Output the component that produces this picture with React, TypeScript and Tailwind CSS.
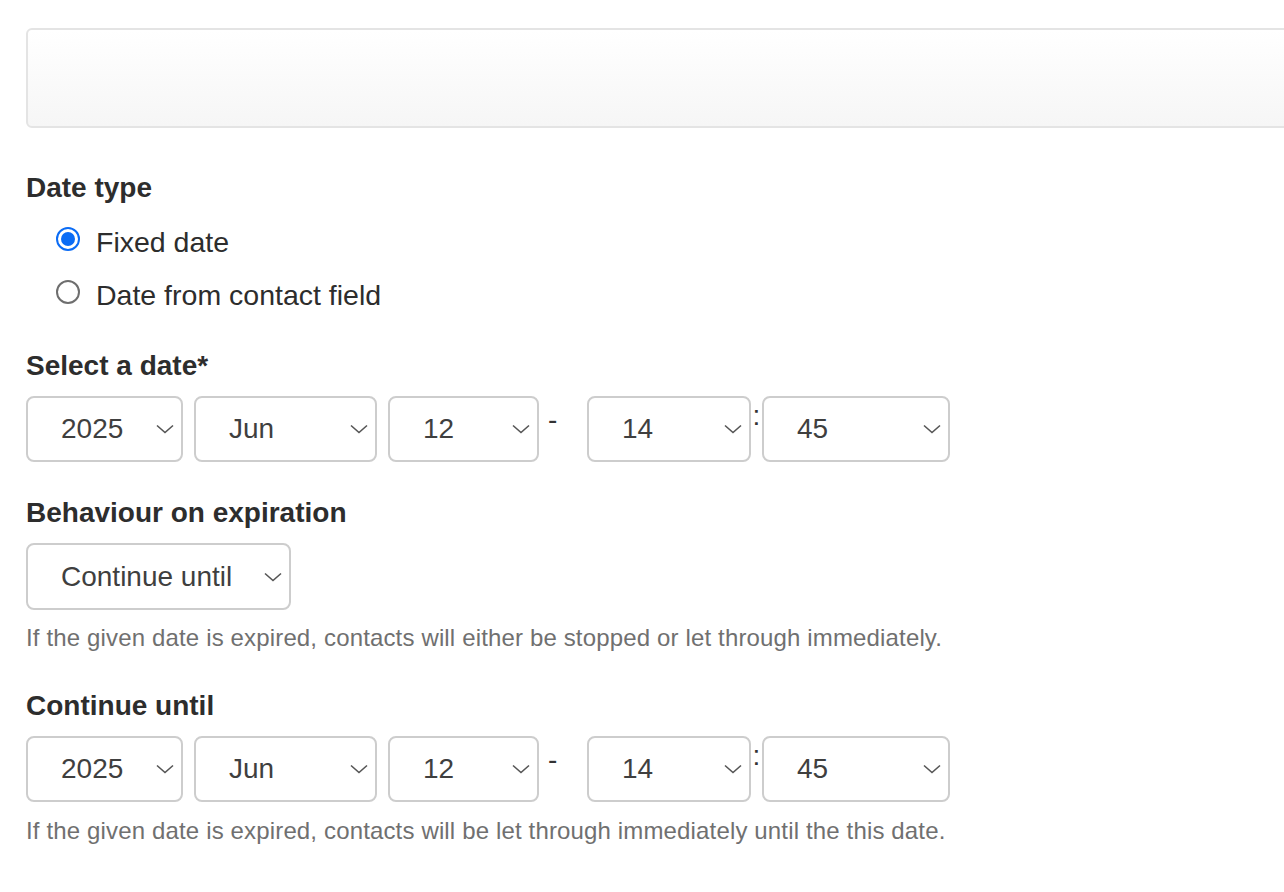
import React from "react";

const font = { fontFamily: '"Liberation Sans", Arial, sans-serif' };

const Chevron = () => (
    <svg width="18" height="10" viewBox="0 0 18 10" fill="none" className="shrink-0">
        <path d="M1 1.5 L9 8.5 L17 1.5" stroke="#555" strokeWidth="1.6" />
    </svg>
);

interface SelectProps {
    value: string
    width: string
}

const FakeSelect = ({ value, width }: SelectProps) => (
    <div
        className={`${width} h-[66px] shrink-0 flex items-center justify-between pl-[33px] pr-[7px] border-2 border-[#cdcdcd] rounded-[8px] bg-white text-[28px] text-[#3f3f3f]`}
    >
        <span>{value}</span>
        <Chevron />
    </div>
);

const DateRow = () => (
    <div className="flex items-start">
        <FakeSelect value="2025" width="w-[157px]" />
        <div className="w-[11px]" />
        <FakeSelect value="Jun" width="w-[183px]" />
        <div className="w-[11px]" />
        <FakeSelect value="12" width="w-[151px]" />
        <span className="w-[48px] pl-[9px] text-[28px] leading-[26px] pt-[11px] text-[#333]">-</span>
        <FakeSelect value="14" width="w-[164px]" />
        <span className="w-[11px] text-center text-[28px] leading-[26px] pt-[7px] text-[#333]">:</span>
        <FakeSelect value="45" width="w-[188px]" />
    </div>
);

const Label = ({ children, className = "" }: { children: React.ReactNode; className?: string }) => (
    <div className={`h-[40px] leading-[40px] text-[28px] font-bold text-[#2d2d2d] ${className}`}>{children}</div>
);

const Help = ({ children, className = "" }: { children: React.ReactNode; className?: string }) => (
    <div className={`h-[30px] leading-[30px] text-[24px] tracking-[0.15px] text-[#707070] ${className}`}>{children}</div>
);

export default function App() {
    return (
        <div className="w-[1284px] h-[892px] overflow-hidden bg-white" style={font}>
            <div className="pl-[26px] pt-[28px]">
                <div className="w-[1300px] h-[100px] rounded-[6px] border-2 border-[#e4e4e4] bg-linear-to-b from-white to-[#f6f6f6]" />

                <Label className="mt-[40px]">Date type</Label>

                <div className="pl-[30px] pt-[8px] text-[28.5px] text-[#2d2d2d]">
                    <div className="h-[53px] flex items-center gap-[16px]">
                        <div className="w-[24px] h-[24px] rounded-full border-2 border-[#0b6cf5] flex items-center justify-center -mt-[8px]">
                            <div className="w-[14px] h-[14px] rounded-full bg-[#0b6cf5]" />
                        </div>
                        <span>Fixed date</span>
                    </div>
                    <div className="h-[53px] flex items-center gap-[16px]">
                        <div className="w-[24px] h-[24px] rounded-full border-2 border-[#6e6e6e] -mt-[8px]" />
                        <span>Date from contact field</span>
                    </div>
                </div>

                <Label className="mt-[24px]">Select a date*</Label>
                <div className="mt-[10px]">
                    <DateRow />
                </div>

                <Label className="mt-[31px]">Behaviour on expiration</Label>
                <div className="mt-[10px]">
                    <div className="w-[265px] h-[67px] flex items-center justify-between pl-[33px] pr-[7px] border-2 border-[#cdcdcd] rounded-[8px] bg-white text-[28px] text-[#3f3f3f]">
                        <span>Continue until</span>
                        <Chevron />
                    </div>
                </div>
                <Help className="mt-[13px]">
                    If the given date is expired, contacts will either be stopped or let through immediately.
                </Help>

                <Label className="mt-[33px]">Continue until</Label>
                <div className="mt-[10px]">
                    <DateRow />
                </div>
                <Help className="mt-[14px]">
                    If the given date is expired, contacts will be let through immediately until the this date.
                </Help>
            </div>
        </div>
    );
}
